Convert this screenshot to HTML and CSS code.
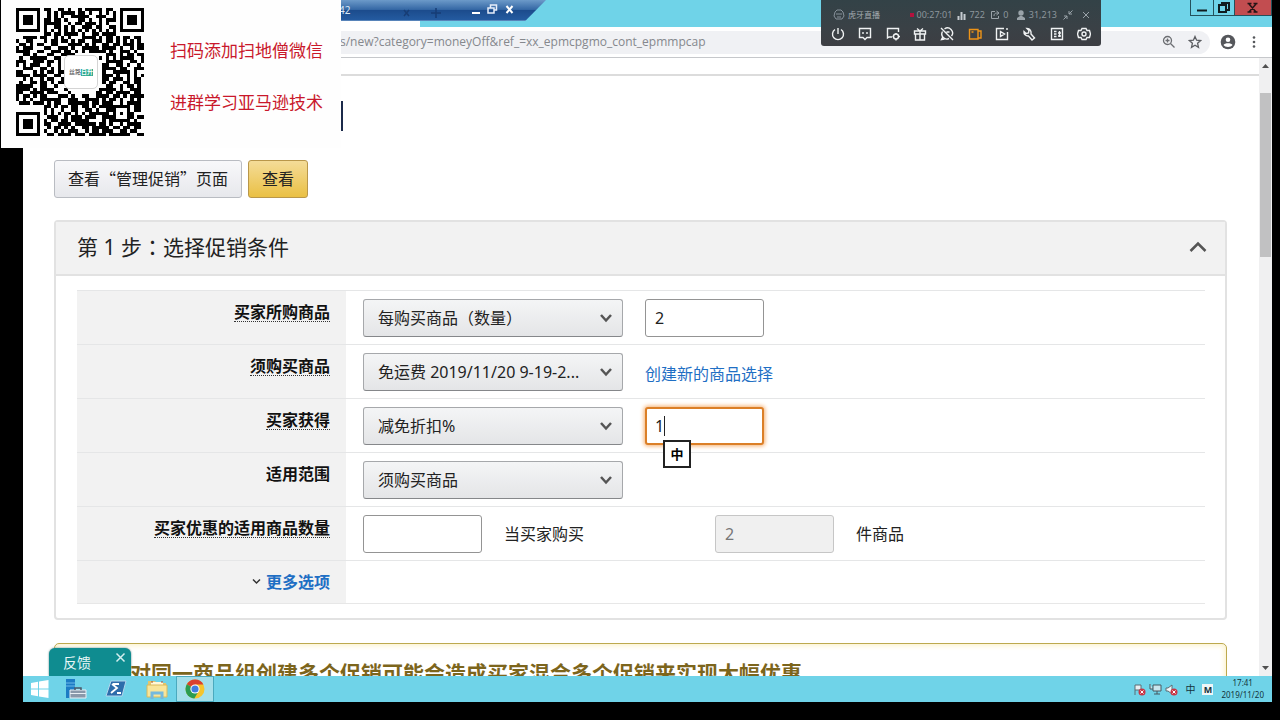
FILE: index.html
```html
<!DOCTYPE html>
<html lang="zh-CN">
<head>
<meta charset="utf-8">
<title>促销</title>
<link rel="stylesheet" href="styles.css">
</head>
<body>
<div class="desktop">
  <header class="titlebar">
    <div class="tab"></div>
    <div class="window-controls">
      <button aria-label="最小化"><svg width="22" height="15"><path d="M6 10.5h10" stroke="#101c20" stroke-width="2"/></svg></button>
      <button aria-label="还原"><svg width="20" height="15"><path d="M5 5h7v7H5zM8 5V3h7v7h-3" fill="none" stroke="#101c20" stroke-width="2"/></svg></button>
      <button class="close" aria-label="关闭"><svg width="36" height="15"><path d="M14 4l7 8M21 4l-7 8M12.500 3.500h4M18.500 3.500h4M12.500 12h4M18.500 12h4" stroke="#241416" stroke-width="1.500"/></svg></button>
    </div>
  </header>
  <div class="addressbar">
    <div class="omnibox">
      <span class="url">s/new?category=moneyOff&amp;ref_=xx_epmcpgmo_cont_epmmpcap</span>
      <svg width="14" height="14" viewBox="0 0 14 14" fill="none" stroke="#6c6e72" stroke-width="1.300"><circle cx="5.500" cy="5.500" r="4"/><path d="M8.500 8.500l4 4M3.500 5.500h4M5.500 3.500v4"/></svg>
      <svg width="14" height="14" viewBox="0 0 14 14" fill="none" stroke="#5c5e62" stroke-width="1.300"><path d="M7 1.500l1.600 3.700 4 .4-3 2.700.9 4L7 10.200l-3.500 2.100.9-4-3-2.700 4-.4z"/></svg>
    </div>
    <svg width="16" height="16" viewBox="0 0 16 16"><circle cx="8" cy="8" r="7.300" fill="#55575b"/><circle cx="8" cy="5.700" r="2.300" fill="#fff"/><path d="M3.500 11c1-2.300 8-2.300 9 0-1.600 2.600-7.400 2.600-9 0z" fill="#fff"/></svg>
    <svg width="16" height="16" viewBox="0 0 16 16" fill="#55575b"><circle cx="8" cy="3.500" r="1.300"/><circle cx="8" cy="8" r="1.300"/><circle cx="8" cy="12.500" r="1.300"/></svg>
  </div>

  <div class="viewport">
    <main class="page">
      <div class="heading-strip"><div class="heading"></div></div>
      <div class="actions">
        <button class="btn">查看“管理促销”页面</button>
        <button class="btn primary">查看</button>
      </div>

      <section class="card">
        <div class="card-head">
          <h2>第 1 步<span class="colon" lang="zh-TW">：</span>选择促销条件</h2>
          <button class="collapse" aria-label="收起"><svg width="18" height="12"><path d="M1.500 10L9 2.500l7.500 7.500" fill="none" stroke="#555" stroke-width="2.500"/></svg></button>
        </div>
        <form class="rows">
          <div class="row">
            <div class="label"><label for="buy">买家所购商品</label></div>
            <div class="fields">
              <div class="select"><select id="buy"><option>每购买商品（数量）</option></select><svg width="14" height="10"><path d="M2 2l5 5.500L12 2" fill="none" stroke="#555" stroke-width="2.500"/></svg></div>
              <input class="box" aria-label="数量" value="2">
            </div>
          </div>
          <div class="row">
            <div class="label"><label for="item">须购买商品</label></div>
            <div class="fields">
              <div class="select"><select id="item"><option>免运费 2019/11/20 9-19-2...</option></select><svg width="14" height="10"><path d="M2 2l5 5.500L12 2" fill="none" stroke="#555" stroke-width="2.500"/></svg></div>
              <a class="create" href="#">创建新的商品选择</a>
            </div>
          </div>
          <div class="row">
            <div class="label"><label for="get">买家获得</label></div>
            <div class="fields">
              <div class="select"><select id="get"><option>减免折扣%</option></select><svg width="14" height="10"><path d="M2 2l5 5.500L12 2" fill="none" stroke="#555" stroke-width="2.500"/></svg></div>
              <div class="focus-wrap"><input class="box focused" aria-label="折扣" value="1"><i class="caret"></i><span class="ime">中</span></div>
            </div>
          </div>
          <div class="row">
            <div class="label"><label class="plain" for="scope">适用范围</label></div>
            <div class="fields">
              <div class="select"><select id="scope"><option>须购买商品</option></select><svg width="14" height="10"><path d="M2 2l5 5.500L12 2" fill="none" stroke="#555" stroke-width="2.500"/></svg></div>
            </div>
          </div>
          <div class="row">
            <div class="label"><label for="count">买家优惠的适用商品数量</label></div>
            <div class="fields">
              <input class="box" id="count">
              <span class="between">当买家购买</span>
              <input class="box" aria-label="购买件数" value="2" disabled>
              <span>件商品</span>
            </div>
          </div>
          <div class="row last">
            <div class="label"><svg width="9" height="7"><path d="M1 1.500l3.500 3.500L8 1.500" fill="none" stroke="#333" stroke-width="1.500"/></svg><a href="#">更多选项</a></div>
            <div class="fields"></div>
          </div>
        </form>
      </section>

      <section class="alert"><h3>对同一商品组创建多个促销可能会造成买家混合多个促销来实现大幅优惠</h3></section>
    </main>
    <div class="scrollbar">
      <svg width="9" height="6"><path d="M1 5l3.500-4L8 5z" fill="#505050"/></svg>
      <div class="track"><div class="thumb"></div></div>
      <svg width="9" height="6"><path d="M1 1l3.500 4L8 1z" fill="#505050"/></svg>
    </div>
    <div class="feedback"><button>反馈</button><button class="x" aria-label="关闭"><svg width="11" height="11"><path d="M1.500 1.500l8 8M9.500 1.500l-8 8" stroke="#d5efef" stroke-width="1.500"/></svg></button></div>
  </div>

  <footer class="taskbar">
    <button aria-label="开始"><svg width="20" height="20" viewBox="0 0 20 20" fill="#fff"><path d="M1 4l7-1.200v6.700H1zM9 2.600L18.500 1v8.500H9zM1 10.500h7v6.700L1 16zM9 10.500h9.500V19L9 17.400z"/></svg></button>
    <button aria-label="服务器管理器"><svg width="24" height="24" viewBox="0 0 24 24"><path d="M3 2h9v19H3z" fill="#1c7cc4"/><path d="M3 6h9M3 9h9" stroke="#6db9e8"/><path d="M7 13h16v8H7z" fill="#8a98aa" stroke="#e8eef4"/><path d="M12 13v-2h6v2" fill="none" stroke="#4c5a6a" stroke-width="1.500"/><path d="M7 16.500h16" stroke="#e8eef4"/></svg></button>
    <button aria-label="PowerShell"><svg width="22" height="20" viewBox="0 0 22 20"><path d="M6 2h15l-4 15H1z" fill="#2d6dab" stroke="#b3d5ec"/><path d="M7 5l5 4-6 5M12 14h4M8 5h6" fill="none" stroke="#fff" stroke-width="1.800"/></svg></button>
    <button aria-label="文件资源管理器"><svg width="24" height="24" viewBox="0 0 24 24"><path d="M3 4h7l2 2h9v14H3z" fill="#e6c56a"/><path d="M6 5h12v4H6z" fill="#fff8d8"/><path d="M2 8h20v12H2z" fill="#f8e59a" stroke="#d8b95c"/><path d="M7 22v-6h10v6" fill="none" stroke="#75b9dd" stroke-width="3"/><path d="M7 4v2M17 4v2" stroke="#a44c2c"/></svg></button>
    <button class="active" aria-label="Chrome"><svg width="20" height="20" viewBox="0 0 20 20"><circle cx="10" cy="10" r="9.500" fill="#f6c42d"/><path d="M10 10L1.800 5.200A9.500 9.500 0 0 1 18.400 5.500H10z" fill="#d9402f"/><path d="M10 10L1.800 5.200A9.500 9.500 0 0 0 9.300 19.500l4.200-7z" fill="#2b9c50"/><circle cx="10" cy="10" r="4.600" fill="#fff"/><circle cx="10" cy="10" r="3.600" fill="#3f7de0"/></svg></button>
    <div class="tray">
      <svg width="13" height="13" viewBox="0 0 13 13"><path d="M2 12V2h6v5H2" fill="#e9eff2" stroke="#5c6c74"/><circle cx="9" cy="9" r="3.500" fill="#c93544"/><path d="M7.500 7.500l3 3m0-3l-3 3" stroke="#fff"/></svg>
      <svg width="13" height="13" viewBox="0 0 13 13" fill="#c9e6ee" stroke="#475860"><path d="M4 2h8v6H4zM1 1v5h3M8 8v3M5 11h6"/></svg>
      <svg width="13" height="13" viewBox="0 0 13 13"><path d="M1 5h2l4-3v9L3 8H1z" fill="#f1f6f8" stroke="#5c6c74"/><circle cx="9" cy="9" r="3.500" fill="#c93544"/><path d="M7.500 7.500l3 3m0-3l-3 3" stroke="#fff"/></svg>
      <span class="lang">中</span>
      <span class="mode">M</span>
      <div class="clock"><span>17:41</span><span>2019/11/20</span></div>
    </div>
  </footer>
</div>

<div class="rdp"><span class="num">42</span>
  <svg class="ghost" width="60" height="14"><path d="M13 5l5 6m0-6l-5 6M45 3v10M40 8h10" stroke="#173d75" stroke-width="1.500"/></svg>
  <svg width="46" height="16"><path d="M3 13h8" stroke="#fff" stroke-width="2"/><path d="M19 8h6v5h-6zM21.500 7.500V5h6v5h-2" fill="none" stroke="#e7eefa" stroke-width="1.500"/><path d="M37.500 6l6 7m0-7l-6 7" stroke="#fff" stroke-width="2"/></svg>
</div>

<div class="qr-panel">
  <svg id="qr" viewBox="0 0 37 37" width="128" height="128" shape-rendering="crispEdges" role="img" aria-label="二维码"></svg>
  <div class="qr-logo"><span>丝路</span><b>日升</b></div>
  <div class="qr-text"><p>扫码添加扫地僧微信</p><p>进群学习亚马逊技术</p></div>
</div>

<div class="live">
  <div class="stats">
    <svg width="12" height="12" viewBox="0 0 12 12" fill="none" stroke="#87919a"><path d="M2 3l2-2h4l2 2 1 4-2 3H3L1 7zM3 5h6M4 8h4"/></svg><span class="brand">虎牙直播</span>
    <i class="rec"></i><span class="time">00:27:01</span>
    <svg width="9" height="9" viewBox="0 0 9 9" stroke="#c5cbd0" stroke-width="2"><path d="M1.500 9V5M4.500 9V1M7.500 9V3"/></svg><span class="s1">722</span>
    <svg width="10" height="10" viewBox="0 0 10 10" fill="none" stroke="#9aa3a9"><path d="M5 1.500H1.500v7h7V6M4 6c0-3 2-3 4-3M6.500 1l2.500 2-2.500 2"/></svg><span class="s2">0</span>
    <svg width="10" height="10" viewBox="0 0 10 10" fill="#9aa3a9"><circle cx="5" cy="3" r="2.700"/><path d="M1 10V8l3-2h2l3 2v2z"/></svg><span class="s3">31,213</span>
    <svg width="10" height="10" viewBox="0 0 10 10" fill="none" stroke="#9aa3a9"><path d="M9.500.500L6 4M6 1v3h3M.500 9.500L4 6M1 6h3v3"/></svg>
    <svg width="10" height="10" viewBox="0 0 10 10" stroke="#9aa3a9"><path d="M2 2l6 6m0-6L2 8"/></svg>
  </div>
  <div class="tools">
    <button aria-label="关播"><svg viewBox="0 0 14 14"><path d="M4 2.500a5.500 5.500 0 1 0 6 0M7 1v6"/></svg></button>
    <button aria-label="弹幕"><svg viewBox="0 0 14 14"><path d="M1.500 1.500h11v9H9l-2 2-2-2H1.500zM5 5v2M9 5v2"/></svg></button>
    <button aria-label="互动设置"><svg viewBox="0 0 14 14"><path d="M6 10H3l-1.500 1V1.500h11V5"/><circle cx="10" cy="9.500" r="2.500"/><path d="M10 6v1M10 12v1.500M6.500 9.500h1M12.500 9.500h1.500"/></svg></button>
    <button aria-label="礼物"><svg viewBox="0 0 14 14"><path d="M1.500 4h11v3h-11zM2.500 7v6h9V7M7 4v9M7 4L4 1.500M7 4l3-2.500"/></svg></button>
    <button aria-label="静音"><svg viewBox="0 0 14 14"><path d="M1 1l12 12M4.500 2a5 5 0 0 1 7 7M2.500 4.500A5 5 0 0 0 9 11.500M3 9.500L1.500 12.500l3-.5M6.500 5h3"/></svg></button>
    <button class="on" aria-label="摄像头"><svg viewBox="0 0 14 14"><path d="M1.500 2.500h8.500v9.500H1.500zM10 4h3v7h-3M3.500 5h2"/></svg></button>
    <button aria-label="视频"><svg viewBox="0 0 14 14"><path d="M9 1.500H1.500v11h11V5M5.500 4.500v5l4-2.500zM12 1v2"/></svg></button>
    <button aria-label="工具"><svg viewBox="0 0 14 14"><path d="M5 1.500l2 2-.5 2.500-2.500.5-2-2A4 4 0 0 0 6.500 9l3.500 4 2.500-2L9 7C9.500 4 8 1.500 5 1.500z"/></svg></button>
    <button aria-label="面板"><svg viewBox="0 0 14 14"><path d="M1.500 1.500h11v11h-11zM4 4.500h2.500M4 7h2.500M4 9.500h2.500M9.500 4v6M8 6h3M8 9h3"/></svg></button>
    <button aria-label="设置"><svg viewBox="0 0 14 14"><path d="M5 1.500h4l1 2h2.500L13.500 7l-1 3.500H10l-1 2H5l-1-2H1.500L.500 7l1-3.500H4z"/><circle cx="7" cy="7" r="2"/></svg></button>
  </div>
</div>
<script src="qr.js"></script>
</body>
</html>
```

FILE: qr.js
```js
const grid = [
  "#######.##..##.#..#.#####.##..#######",
  "#.....#..#.#.####.##.#..#.#.#.#.....#",
  "#.###.#..#.#.#..#####..###..#.#.###.#",
  "#.###.#.##.##.#...##.#..#.###.#.###.#",
  "#.###.#.#####..#.##.###.#.#...#.###.#",
  "#.....#.#..##.#.#..###.##..##.#.....#",
  "#######.#.#.#.#.#.#.#.#.#.#.#.#######",
  "........##.##.####.#..##.####........",
  "..####.##..#.#.#...####.#.##.#.##.##.",
  "#..##...#.##.##.#.##..###.##.#.#.#.#.",
  ".##.#.##..##...####.#.#..##.##.###.##",
  "#.###...##..###.#..#####.####.#..#.##",
  "####..##..###.##.#.#.#####.#..###.#..",
  "..##.#...##..####.........###.#.##.##",
  ".#..#####..##...........#.#.#.####..#",
  "###..###.##.#.............#####..##.#",
  "#.#.###..#..#............##..##.#..#.",
  "..###..##.#.#............####.##..###",
  "##...#.#.##.##...........#..#####.#..",
  "####.####..##............###.#..#.#.#",
  "..#.#..#.##..#...........##.###.#.##.",
  ".#..##.##.#.##...........#.##..##.##.",
  "#####..##..#..............##..#.##.#.",
  "####.#.####...#.........#####.#..###.",
  "##..####.###...#.......##.##.####.##.",
  "#.##.#.##...###.#..##..####.##.#.####",
  "#.#.#..######..###..####.#.##.#..#.#.",
  ".###.###.#.##..######.##.###..#.####.",
  "........##.#.##.##.##.#.#########.##.",
  "........#.#..#..##..##.#..###...#.##.",
  "#######.#.#.#.##.#.#.######.#.#.##...",
  "#.....#..###..#.###.###..####...##.##",
  "#.###.#.#.##.##.#####....#.######.#..",
  "#.###.#.##..####.######.##.#..#.####.",
  "#.###.#..#.##.#.#..##.#####.##.##.##.",
  "#.....#.#..#.#.###..#.##.###..##.##..",
  "#######..##.####.###.#####.######..##"
];
let d = "";
grid.forEach((row, y) => {
  for (let x = 0; x < row.length; x++) {
    if (row[x] === "#") d += `M${x} ${y}h1v1h-1z`;
  }
});
const path = document.createElementNS("http://www.w3.org/2000/svg", "path");
path.setAttribute("d", d);
document.getElementById("qr").appendChild(path);
```

FILE: styles.css
```css
* { box-sizing: border-box; }
body {
  margin: 0;
  background: #000;
  color: #222;
  font: 16px/22px "Noto Sans", "Noto Sans CJK SC", sans-serif;
  overflow: hidden;
}
button, input, select { font: inherit; color: inherit; margin: 0; }
button { border: 0; padding: 0; background: none; }
svg { display: block; flex: none; }
a { color: #1f6fc4; text-decoration: none; }

.desktop {
  display: flex;
  flex-direction: column;
  height: calc(100vh - 18px);
  margin: 0 8px 18px 23px;
  background: #fff;
}
.titlebar { display: flex; justify-content: space-between; height: 27px; background: #6fd3e8; }
.tab { width: 397px; background: #fff; border-radius: 0 0 0 4px; }
.window-controls { display: flex; height: 16px; border: 1px solid #24515c; border-top: 0; }
.window-controls button + button { border-left: 1px solid #24515c; }
.window-controls .close { background: #c24d50; }
.addressbar {
  display: flex;
  align-items: center;
  gap: 10px;
  height: 31px;
  padding-right: 10px;
  border-bottom: 1px solid #c6c8cb;
}
.omnibox {
  display: flex;
  flex: 1;
  align-items: center;
  gap: 12px;
  height: 23px;
  padding: 0 8px 0 317px;
  border-radius: 0 12px 12px 0;
  background: #f0f1f4;
}
.url { flex: 1; color: #85888d; font: 12px/18px "Open Sans", sans-serif; }

.viewport { position: relative; display: flex; flex: 1; min-height: 0; overflow: hidden; }
.page { flex: 1; min-width: 0; overflow: hidden; }
.heading-strip { height: 86px; margin-top: 16px; padding-top: 25px; border-top: 2px solid #dcdcdc; }
.heading { width: 320px; height: 30px; border-right: 2px solid #1b2a4a; }
.actions { display: flex; gap: 6px; padding: 0 31px; }
.btn {
  height: 38px;
  padding: 0 13px 2px;
  border: 1px solid #b9bcc2;
  border-radius: 3px;
  background: linear-gradient(#f8f8fa, #e7e8ec);
  font-family: "Noto Sans CJK SC", sans-serif;
}
.btn.primary { border-color: #b9974a; background: linear-gradient(#f4dc98, #eac044); }

.card { margin: 22px 32px 0 31px; border: 2px solid #e2e2e2; border-radius: 4px; }
.card-head {
  display: flex;
  align-items: center;
  justify-content: space-between;
  height: 54px;
  padding: 0 18px 3px 21px;
  border-bottom: 2px solid #e2e2e2;
  background: #f2f2f2;
}
.card-head h2 { margin: 0; font-size: 21px; line-height: 30px; font-weight: 400; }
.colon { font-family: "Noto Sans CJK TC", sans-serif; }
.rows { margin: 14px 20px 14px 21px; border-bottom: 1px solid #e7e7e7; }
.row { display: flex; min-height: 54px; border-top: 1px solid #e5e6e7; }
.row.last { min-height: 43px; }
.label {
  display: flex;
  align-items: flex-start;
  justify-content: flex-end;
  gap: 5px;
  width: 269px;
  padding: 10px 16px 0 0;
  background: #f2f2f2;
  font-family: "Noto Sans CJK SC", sans-serif;
  line-height: 20px;
}
.label label { border-bottom: 1px dotted #333; color: #111; font-weight: 700; }
.label .plain { border: 0; }
.label a { font-weight: 700; }
.label svg { margin-top: 7px; }
.fields { display: flex; flex: 1; align-items: center; gap: 22px; padding: 1px 0 0 17px; }
.create { padding-top: 4px; }
.select { position: relative; width: 260px; }
.select select {
  display: block;
  appearance: none;
  width: 100%;
  height: 38px;
  padding: 0 30px 0 14px;
  border: 1px solid #a6a8ab;
  border-bottom-color: #85878a;
  border-radius: 3px;
  background: linear-gradient(#f4f5f6, #e4e5e7);
}
.select svg { position: absolute; right: 10px; top: 14px; pointer-events: none; }
.box {
  width: 119px;
  height: 38px;
  padding: 0 9px;
  border: 1px solid #949494;
  border-radius: 3px;
  background: #fff;
  outline: 0;
}
.box:disabled { border-color: #c6c6c6; background: #f0f0f0; color: #777; }
.box.focused { border: 2px solid #db7f27; padding: 0 8px; box-shadow: 0 0 4px 1px #f5ad6a; }
.focus-wrap { position: relative; }
.caret { position: absolute; left: 19px; top: 9px; width: 1px; height: 20px; background: #222; }
.ime {
  position: absolute;
  left: 18px;
  top: 33px;
  z-index: 1;
  width: 28px;
  height: 28px;
  border: 2px solid #222;
  background: #fff;
  color: #000;
  font-size: 13px;
  line-height: 24px;
  font-weight: 700;
  text-align: center;
}
.between { width: 189px; }
.alert {
  height: 80px;
  margin: 23px 32px 0 31px;
  padding: 14px 0 0 75px;
  border: 1px solid #bda94e;
  border-radius: 5px;
  box-shadow: inset 0 0 5px 2px #fcf3cf;
}
.alert h3 { margin: 0; color: #7c651c; font-size: 21px; line-height: 30px; white-space: nowrap; font-weight: 700; }

.scrollbar {
  display: flex;
  flex-direction: column;
  align-items: center;
  width: 13px;
  padding: 5px 0;
  background: #f0f0f1;
}
.track { flex: 1; width: 11px; padding-top: 24px; }
.thumb { height: 164px; background: #c1c1c2; }
.feedback {
  position: absolute;
  left: 26px;
  bottom: 0;
  display: flex;
  justify-content: space-between;
  align-items: flex-start;
  width: 82px;
  height: 28px;
  padding: 4px 5px 0 14px;
  border-radius: 6px 6px 0 0;
  background: #0f8c90;
  box-shadow: 0 0 2px #45777a;
  color: #e8f7f7;
  font-size: 14px;
}

.taskbar { display: flex; height: 26px; background: #6fd3e8; }
.taskbar button { display: flex; align-items: center; justify-content: center; width: 38px; }
.taskbar button:nth-child(1) { width: 33px; }
.taskbar button:nth-child(3) { width: 44px; }
.taskbar .active { border: 1px solid #4aa9be; background: #a4dfea; }
.tray { display: flex; align-items: center; gap: 3px; margin-left: auto; padding-right: 8px; color: #14333c; }
.tray .lang { width: 18px; font-size: 10px; text-align: center; }
.tray .mode { width: 11px; height: 11px; background: #eef6f8; font: 700 9px/11px "Noto Sans", sans-serif; text-align: center; }
.clock { display: flex; flex-direction: column; align-items: center; margin-left: 5px; font-size: 8px; line-height: 12px; }

.rdp {
  position: absolute;
  left: 200px;
  top: 0;
  display: flex;
  align-items: flex-start;
  width: 346px;
  height: 21px;
  padding: 0 24px 0 139px;
  background: linear-gradient(#6c9ac9 0, #3568a5 45%, #1c4c8d 50%, #245ba0 95%, #86a9d0);
  clip-path: polygon(0 0, 100% 0, 94% 100%, 0 100%);
  color: #dce8f6;
}
.rdp .num { width: 55px; font-size: 10px; line-height: 20px; }
.rdp .ghost { margin: 5px 18px 0 -3px; }

.qr-panel {
  position: absolute;
  left: 1px;
  top: 0;
  display: flex;
  align-items: flex-start;
  gap: 26px;
  width: 340px;
  height: 148px;
  padding: 8px 15px;
  background: #fefefe;
}
.qr-logo {
  position: absolute;
  left: 63px;
  top: 55px;
  display: flex;
  align-items: center;
  justify-content: center;
  width: 34px;
  height: 34px;
  border: 1px solid #d4d4d4;
  border-radius: 5px;
  background: #fff;
  color: #444;
  font-size: 6px;
  line-height: 7px;
}
.qr-logo b { background: #2ba88e; color: #fff; }
.qr-text { display: flex; flex-direction: column; gap: 28px; padding-top: 31px; }
.qr-text p { margin: 0; color: #c9182b; font-size: 17px; line-height: 24px; white-space: nowrap; }

.live {
  position: absolute;
  left: 821px;
  top: 0;
  width: 280px;
  height: 46px;
  padding: 9px 10px 0;
  border-radius: 0 0 3px 3px;
  background: linear-gradient(#334247, #3a4146 60%, #3d3e43);
  color: #8d969c;
  font-size: 9px;
  line-height: 12px;
}
.stats { display: flex; align-items: center; gap: 3px; padding-left: 2px; height: 12px; }
.stats .brand { width: 59px; font-size: 8px; color: #a4acb1; }
.stats .time { width: 40px; white-space: nowrap; }
.rec { width: 4px; height: 4px; margin-left: 3px; background: #b3123e; }
.s1 { width: 19px; }
.s2 { width: 10px; }
.s3 { width: 33px; }
.stats svg:last-child { margin-left: 5px; }
.tools { display: flex; justify-content: space-between; margin-top: 6px; }
.tools svg { width: 14px; height: 14px; fill: none; stroke: #f0f2f3; stroke-width: 1.4; }
.tools .on svg { stroke: #ef9417; }
```
